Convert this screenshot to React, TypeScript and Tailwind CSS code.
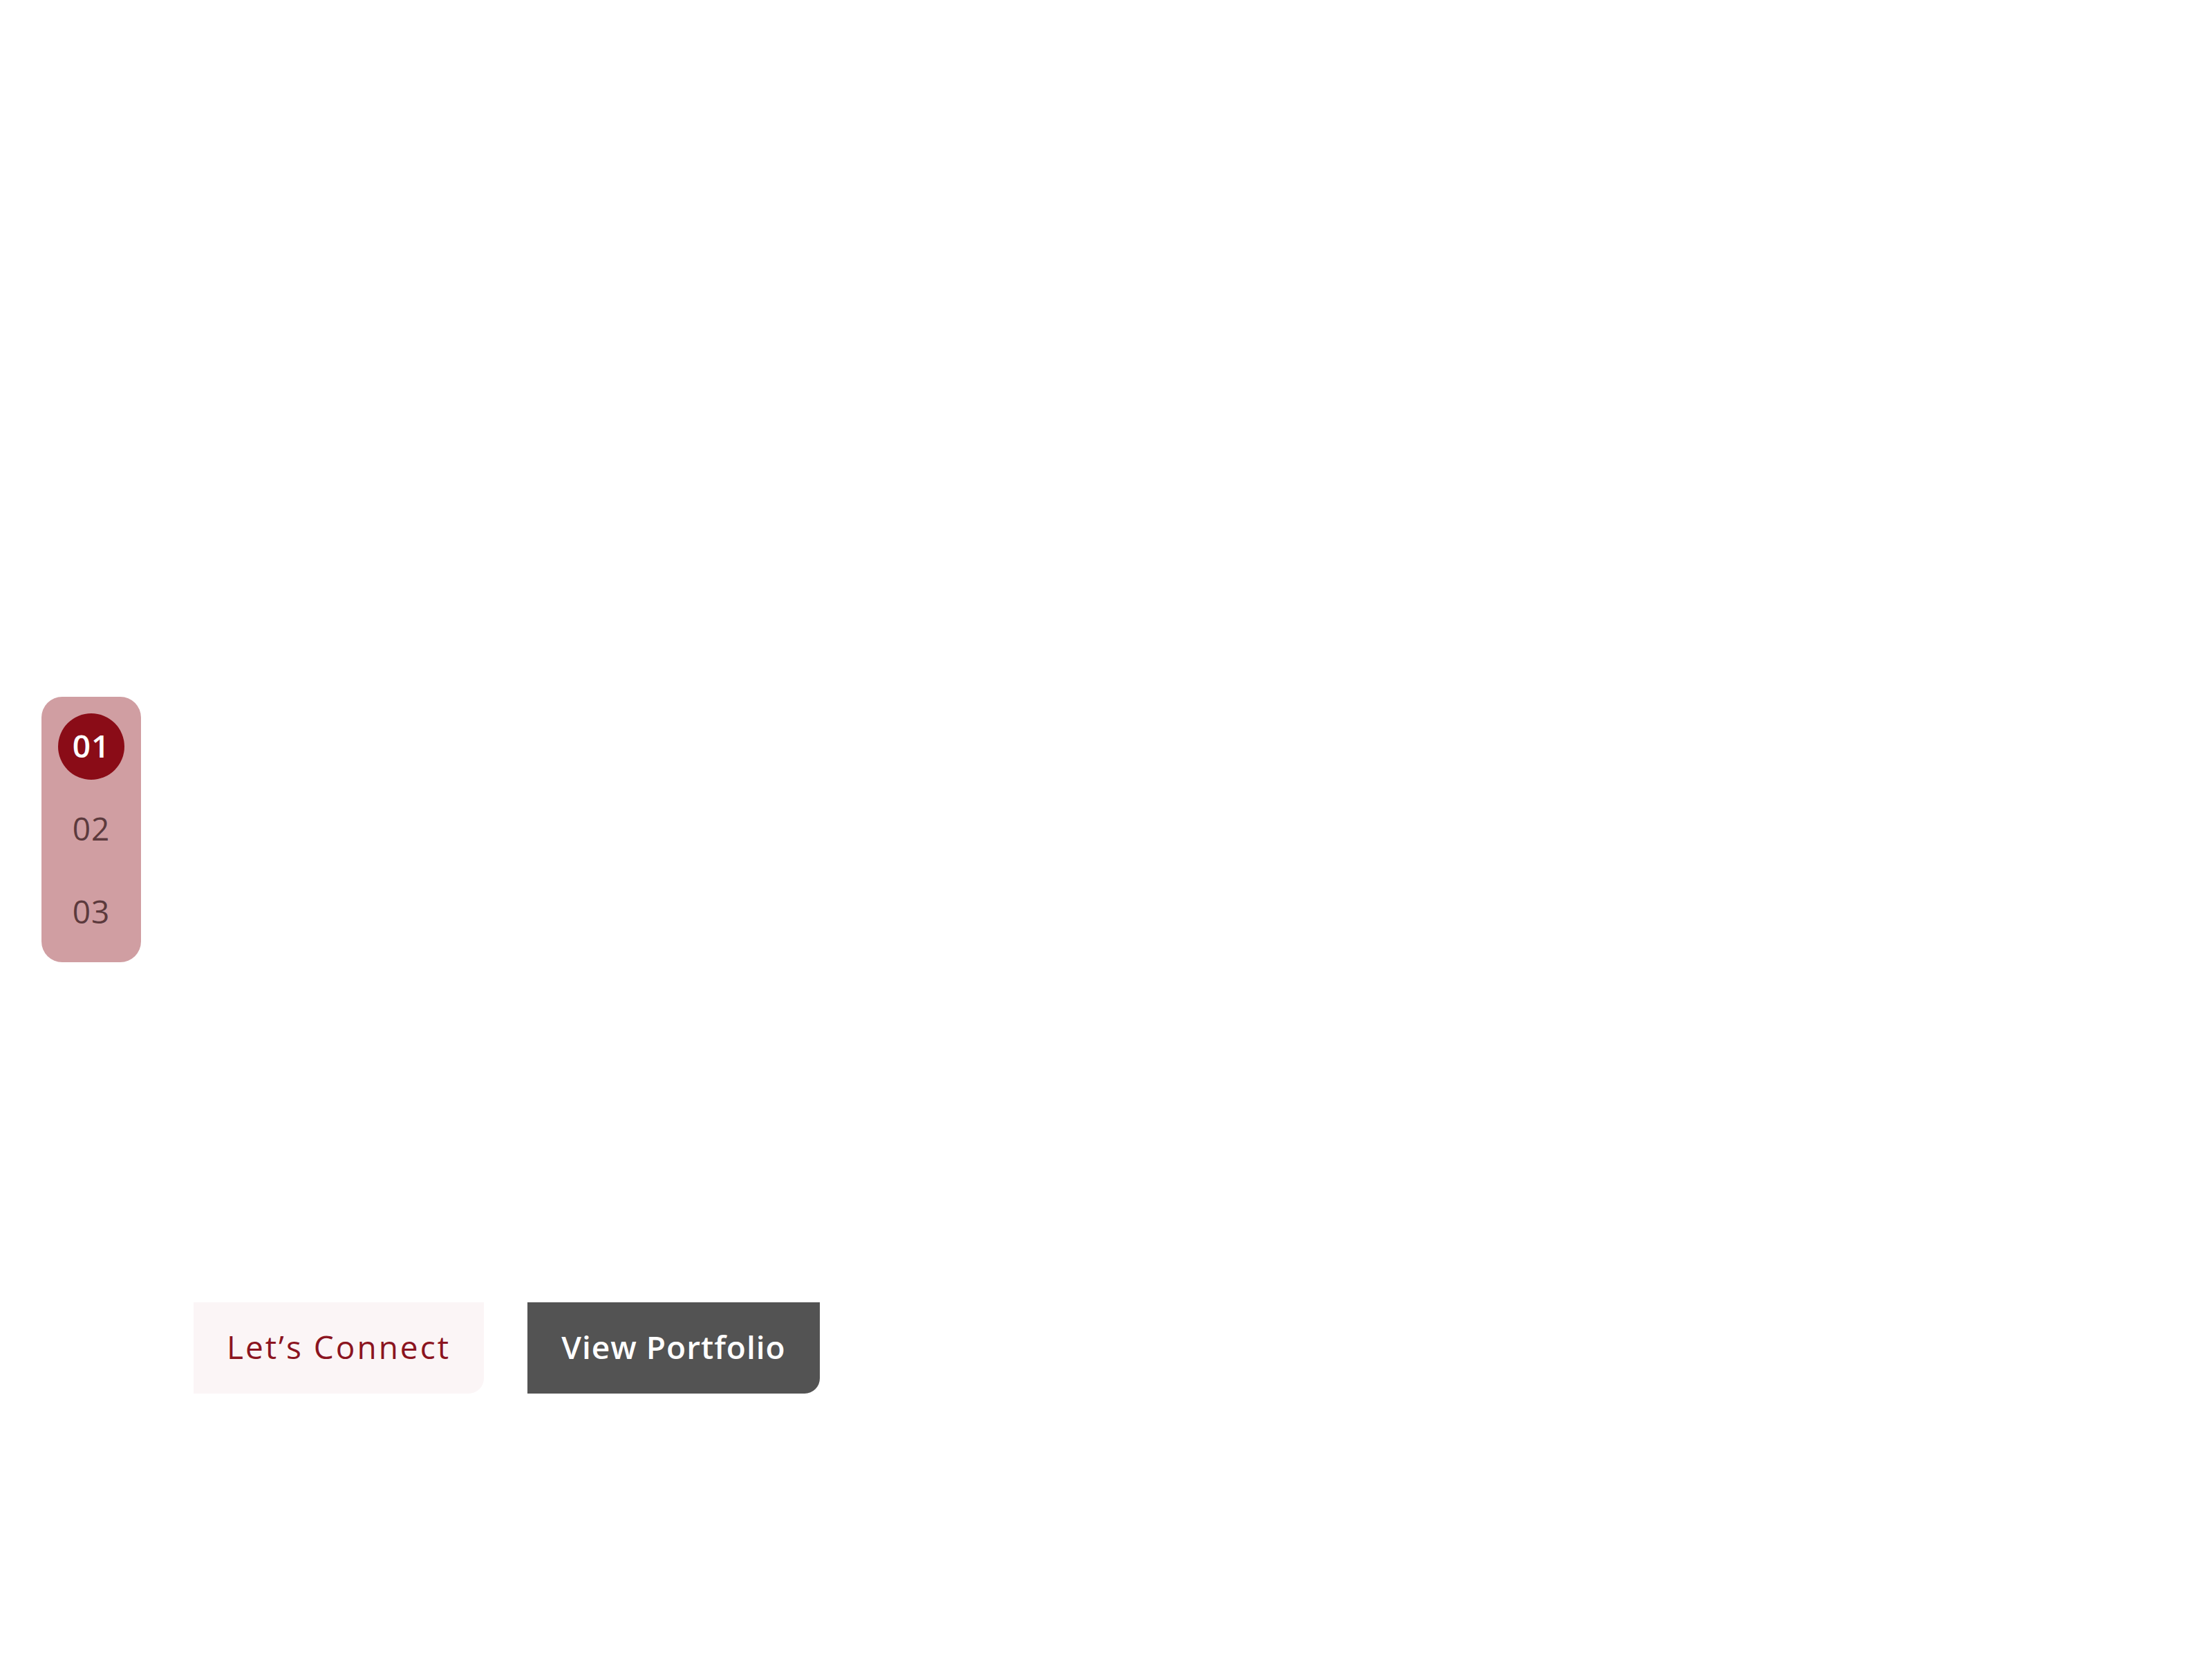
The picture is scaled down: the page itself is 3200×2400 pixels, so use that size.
import React from "react";

const font = { fontFamily: '"Open Sans", "Liberation Sans", sans-serif' };

function SlideDots() {
  const items = ["01", "02", "03"];
  return (
    <nav className="flex w-[144px] flex-col items-center gap-[24px] rounded-[30px] bg-[#d09ea2] py-[24px]">
      {items.map((n, i) =>
        i === 0 ? (
          <span
            key={n}
            className="flex h-[96px] w-[96px] items-center justify-center rounded-full bg-[#8a0c17] pb-[5px] text-[46px] font-semibold leading-none tracking-[1px] text-white"
          >
            {n}
          </span>
        ) : (
          <span
            key={n}
            className="flex h-[96px] w-[96px] items-center justify-center pb-[5px] text-[46px] font-normal leading-none tracking-[1px] text-[#5c3a3d]"
          >
            {n}
          </span>
        )
      )}
    </nav>
  );
}

export default function App() {
  return (
    <div className="min-h-[2400px] w-[3200px] bg-white" style={font}>
      <div className="pl-[60px] pt-[1008px]">
        <SlideDots />
      </div>
      <div className="mt-[492px] flex gap-[63px] pl-[280px]">
        <button className="flex h-[132px] w-[420px] items-center justify-center rounded-br-[22px] bg-[#fbf5f6] pb-[3px] text-[46px] font-medium tracking-[3px] text-[#8b1420]">
          Let’s Connect
        </button>
        <button className="flex h-[132px] w-[423px] items-center justify-center rounded-br-[22px] bg-[#535353] pb-[3px] text-[46px] font-semibold tracking-[1px] text-white">
          View Portfolio
        </button>
      </div>
    </div>
  );
}
